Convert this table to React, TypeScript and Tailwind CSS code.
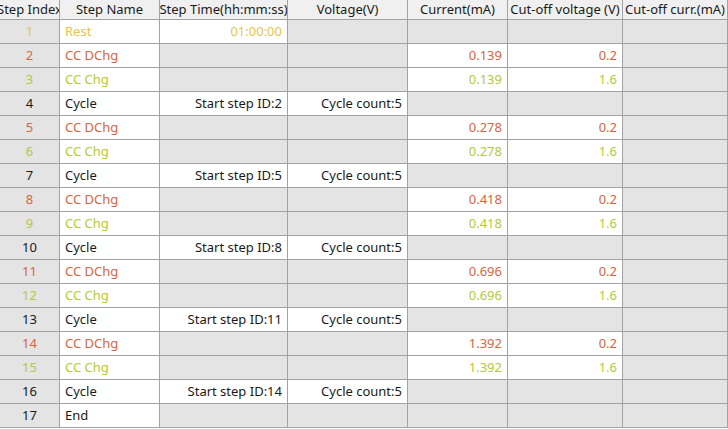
const RED = "text-[#d8653f]";
const GREEN = "text-[#b5c93a]";
const GOLD = "text-[#e8c545]";

type Row = {
	idx: number;
	name: string;
	kind: "rest" | "dchg" | "chg" | "cycle" | "end";
	time?: string;
	voltage?: string;
	current?: string;
	cutV?: string;
};

const rows: Row[] = [
	{ idx: 1, name: "Rest", kind: "rest", time: "01:00:00" },
	{ idx: 2, name: "CC DChg", kind: "dchg", current: "0.139", cutV: "0.2" },
	{ idx: 3, name: "CC Chg", kind: "chg", current: "0.139", cutV: "1.6" },
	{ idx: 4, name: "Cycle", kind: "cycle", time: "Start step ID:2", voltage: "Cycle count:5" },
	{ idx: 5, name: "CC DChg", kind: "dchg", current: "0.278", cutV: "0.2" },
	{ idx: 6, name: "CC Chg", kind: "chg", current: "0.278", cutV: "1.6" },
	{ idx: 7, name: "Cycle", kind: "cycle", time: "Start step ID:5", voltage: "Cycle count:5" },
	{ idx: 8, name: "CC DChg", kind: "dchg", current: "0.418", cutV: "0.2" },
	{ idx: 9, name: "CC Chg", kind: "chg", current: "0.418", cutV: "1.6" },
	{ idx: 10, name: "Cycle", kind: "cycle", time: "Start step ID:8", voltage: "Cycle count:5" },
	{ idx: 11, name: "CC DChg", kind: "dchg", current: "0.696", cutV: "0.2" },
	{ idx: 12, name: "CC Chg", kind: "chg", current: "0.696", cutV: "1.6" },
	{ idx: 13, name: "Cycle", kind: "cycle", time: "Start step ID:11", voltage: "Cycle count:5" },
	{ idx: 14, name: "CC DChg", kind: "dchg", current: "1.392", cutV: "0.2" },
	{ idx: 15, name: "CC Chg", kind: "chg", current: "1.392", cutV: "1.6" },
	{ idx: 16, name: "Cycle", kind: "cycle", time: "Start step ID:14", voltage: "Cycle count:5" },
	{ idx: 17, name: "End", kind: "end" },
];

const headers = [
	"Step Index",
	"Step Name",
	"Step Time(hh:mm:ss)",
	"Voltage(V)",
	"Current(mA)",
	"Cut-off voltage (V)",
	"Cut-off curr.(mA)",
];

const colorFor = (kind: Row["kind"]) =>
	kind === "rest" ? GOLD : kind === "dchg" ? RED : kind === "chg" ? GREEN : "text-[#1a1a1a]";

function Cell({
	white,
	align = "right",
	color,
	children,
}: {
	white?: boolean;
	align?: "left" | "right" | "center";
	color?: string;
	children?: React.ReactNode;
}) {
	const justify =
		align === "left" ? "justify-start pl-[5px]" : align === "center" ? "justify-center" : "justify-end pr-[5px]";
	return (
		<div
			className={`flex items-center h-[24px] border-r border-b border-[#a3a3a3] whitespace-nowrap overflow-hidden ${justify} ${
				white ? "bg-white" : "bg-[#e4e4e4]"
			} ${color ?? ""}`}
		>
			{children}
		</div>
	);
}

export default function App() {
	return (
		<div
			className="w-[728px] h-[429px] overflow-hidden bg-white text-[13px] text-[#1a1a1a]"
			style={{ fontFamily: '"Noto Sans", "Open Sans", sans-serif' }}
		>
			<div className="grid grid-cols-[60px_100px_128px_120px_100px_115px_105px] w-[728px]">
				{headers.map((h) => (
					<div
						key={h}
						className="flex items-center justify-center h-[20px] bg-[#f0f0f0] border-r border-b border-[#a3a3a3] whitespace-nowrap overflow-hidden last:border-r-0 last:justify-start last:pl-[1px]"
					>
						{h}
					</div>
				))}
				{rows.map((r) => {
					const c = colorFor(r.kind);
					const cc = r.kind === "dchg" || r.kind === "chg";
					const cyc = r.kind === "cycle";
					return [
						<Cell key={`${r.idx}-i`} align="center" color={c}>
							{r.idx}
						</Cell>,
						<Cell key={`${r.idx}-n`} white align="left" color={c}>
							{r.name}
						</Cell>,
						<Cell key={`${r.idx}-t`} white={r.kind === "rest" || cyc} color={c}>
							{r.time}
						</Cell>,
						<Cell key={`${r.idx}-v`} white={cyc} color={c}>
							{r.voltage}
						</Cell>,
						<Cell key={`${r.idx}-c`} white={cc} color={c}>
							{r.current}
						</Cell>,
						<Cell key={`${r.idx}-cv`} white={cc} color={c}>
							{r.cutV}
						</Cell>,
						<Cell key={`${r.idx}-ci`} color={c} />,
					];
				})}
			</div>
		</div>
	);
}
